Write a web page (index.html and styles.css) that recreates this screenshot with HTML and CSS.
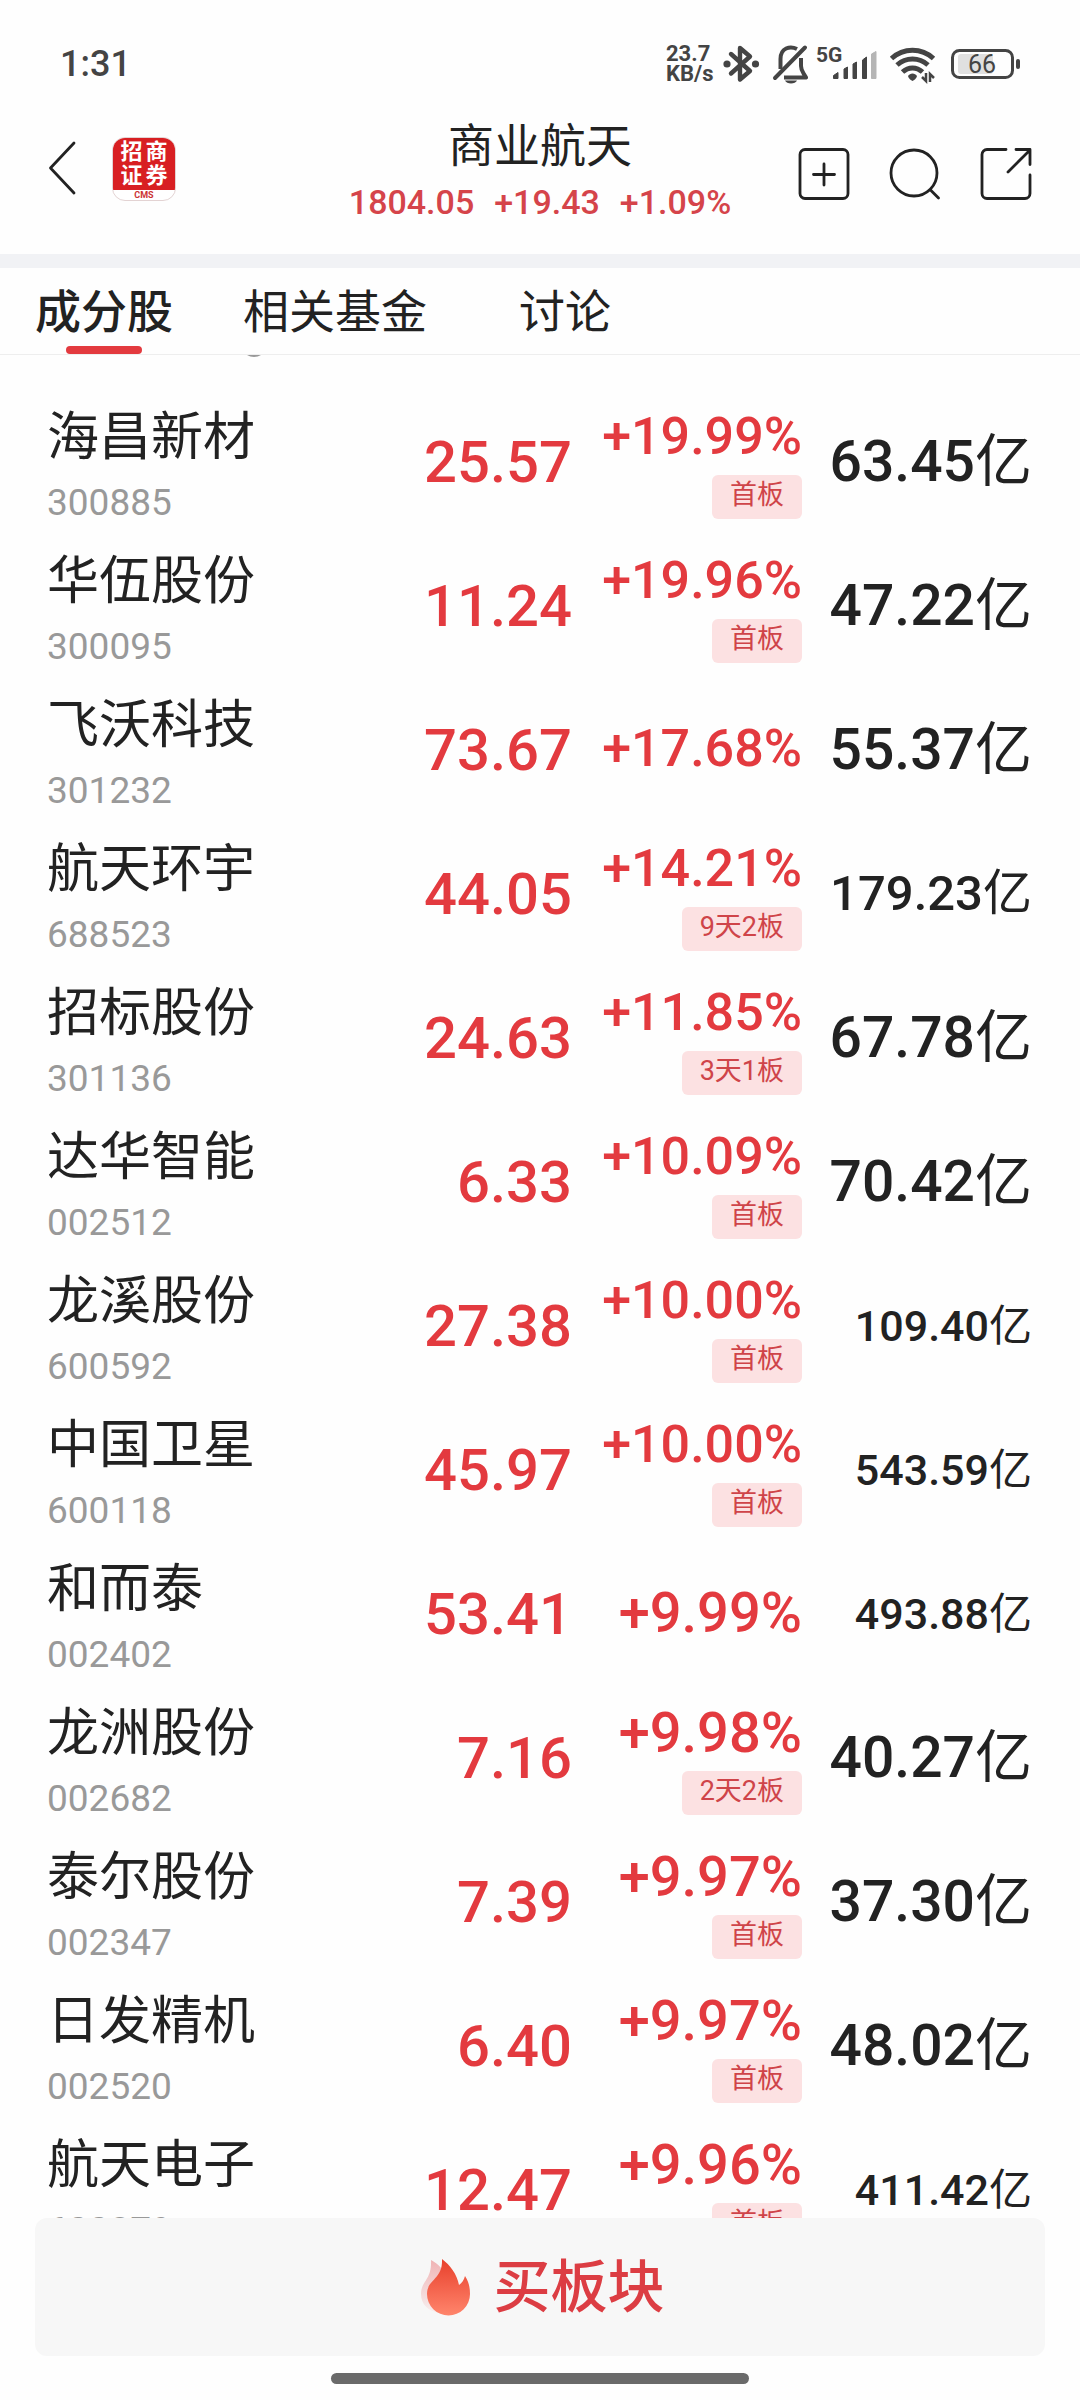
FILE: index.html
```html
<!DOCTYPE html>
<html lang="zh-CN">
<head>
<meta charset="utf-8">
<meta name="viewport" content="width=device-width, initial-scale=1">
<title>商业航天</title>
<link rel="stylesheet" href="styles.css">
</head>
<body>
<div class="app">
  <div class="status">
    <span class="clock">1:31</span>
    <div class="status-icons">
      <span class="rate"><span>23.7</span><span>KB/s</span></span>
      <svg width="40" height="40" viewBox="0 0 40 40" fill="none" stroke="#444" stroke-width="4.4" stroke-linejoin="round" stroke-linecap="round" aria-label="蓝牙">
        <path d="M9 10 28 27 18 35.500V4L28 12.500 9 29.500"/>
        <circle cx="5" cy="20" r="3.600" fill="#444" stroke="none"/><circle cx="33.500" cy="20" r="3.600" fill="#444" stroke="none"/>
      </svg>
      <svg width="38" height="40" viewBox="0 0 38 40" fill="none" stroke="#444" stroke-width="4" aria-label="静音">
        <path d="M5 34 35 3.500" stroke-linecap="round"/>
        <path d="M10.500 25V15C10.500 4 20 1.500 27 5"/>
        <path d="M31 14v8c0 5 2 6 5 11.500H14" stroke-linejoin="round"/>
        <path d="M15 36.500h12c-1.500 4-10.500 4-12 0Z" fill="#444" stroke="none"/>
      </svg>
      <svg width="64" height="40" viewBox="0 0 64 40" fill="#444" aria-label="5G 信号">
        <text x="0" y="18" class="net">5G</text>
        <path d="M17.500 34.500v-3l4.500-3v6ZM28 34.500V25l3.500-2v11.500ZM37 34.500V20l3.500-2v16.500ZM46.500 34.500V16l4-3v21.500Z" stroke="#444" stroke-linejoin="round"/>
        <path d="M55.500 10 60 7.500V34.500h-4.500Z" fill="#b5b5b5" stroke="#b5b5b5" stroke-linejoin="round"/>
      </svg>
      <svg width="54" height="40" viewBox="0 0 54 40" fill="none" stroke="#444" stroke-width="5" aria-label="无线网络">
        <path d="M3.500 14.500c12-11 30-11 42 0"/>
        <path d="M9 21c9-8 22-8 31 0"/>
        <path d="M14.500 28c6-5.500 14-5.500 20 0"/>
        <path d="M20 32c2-3.500 7-3.500 9 0-.5 2.500-3 4.500-4.500 5-1.500-.5-4-2.500-4.500-5Z" fill="#444" stroke="none"/>
        <path d="M38 29v8l-4-4M42 38v-8l4 4" stroke-width="2.500"/>
      </svg>
      <svg width="70" height="40" viewBox="0 0 70 40" aria-label="电量 66">
        <rect x="2.500" y="6.500" width="60" height="27" rx="7" fill="none" stroke="#444" stroke-width="3"/>
        <rect x="8" y="10" width="35" height="20" rx="3" fill="#e0e0e0"/>
        <rect x="66" y="15" width="4" height="10" rx="2" fill="#444"/>
        <text x="32" y="28.500" class="charge">66</text>
      </svg>
    </div>
  </div>

  <header class="header">
    <div class="header-left">
      <button class="icon-btn" aria-label="返回">
        <svg width="28" height="56" viewBox="0 0 28 56" fill="none" stroke="#222" stroke-width="2.800" stroke-linecap="round" stroke-linejoin="round"><path d="M26 2 2.500 27 26 52"/></svg>
      </button>
      <a class="logo" href="#" aria-label="招商证券">
        <span class="logo-main"><span>招</span><span>商</span><span>证</span><span>券</span></span>
        <span class="logo-sub">CMS</span>
      </a>
    </div>
    <div class="header-mid">
      <h1 class="title">商业航天</h1>
      <p class="index"><span>1804.05</span><span>+19.43</span><span>+1.09%</span></p>
    </div>
    <div class="header-right">
      <button class="icon-btn" aria-label="添加">
        <svg width="52" height="52" viewBox="0 0 52 52" fill="none" stroke="#222" stroke-width="2.800" stroke-linecap="round"><rect x="2" y="1.500" width="48" height="49" rx="5"/><path d="M26 16v21M15.500 26.500h21"/></svg>
      </button>
      <button class="icon-btn" aria-label="搜索">
        <svg width="52" height="52" viewBox="0 0 52 52" fill="none" stroke="#222" stroke-width="2.800" stroke-linecap="round"><circle cx="25" cy="25" r="23"/><path d="m41.500 42 8 8"/></svg>
      </button>
      <button class="icon-btn" aria-label="分享">
        <svg width="52" height="52" viewBox="0 0 52 52" fill="none" stroke="#222" stroke-width="2.800" stroke-linecap="round" stroke-linejoin="round"><path d="M26 1.500H7a5 5 0 0 0-5 5v39a5 5 0 0 0 5 5h38a5 5 0 0 0 5-5V27M36 1.500h14v15M49 3 28 24"/></svg>
      </button>
    </div>
  </header>

  <nav class="tabs">
    <a class="tab tab-active" href="#" aria-current="page">成分股</a>
    <a class="tab" href="#">相关基金</a>
    <a class="tab" href="#">讨论</a>
  </nav>

  <main class="list">
    <table class="stocks">
      <colgroup><col><col class="c-price"><col class="c-change"><col class="c-cap"></colgroup>
      <thead>
        <tr>
          <th><span class="th-name">名称代码<svg width="28" height="28" viewBox="0 0 28 28" aria-hidden="true"><circle cx="14" cy="14" r="13" fill="#999"/></svg></span></th>
          <th>最新价</th><th>涨跌幅</th><th>总市值</th>
        </tr>
      </thead>
      <tbody>
        <tr><td><div class="name">海昌新材</div><div class="code">300885</div></td><td class="price">25.57</td><td><div class="change change-long">+19.99%</div><span class="tag">首板</span></td><td class="cap">63.45<span class="unit">亿</span></td></tr>
        <tr><td><div class="name">华伍股份</div><div class="code">300095</div></td><td class="price">11.24</td><td><div class="change change-long">+19.96%</div><span class="tag">首板</span></td><td class="cap">47.22<span class="unit">亿</span></td></tr>
        <tr><td><div class="name">飞沃科技</div><div class="code">301232</div></td><td class="price">73.67</td><td><div class="change change-long">+17.68%</div></td><td class="cap">55.37<span class="unit">亿</span></td></tr>
        <tr><td><div class="name">航天环宇</div><div class="code">688523</div></td><td class="price">44.05</td><td><div class="change change-long">+14.21%</div><span class="tag">9天2板</span></td><td class="cap cap-mid">179.23<span class="unit">亿</span></td></tr>
        <tr><td><div class="name">招标股份</div><div class="code">301136</div></td><td class="price">24.63</td><td><div class="change change-long">+11.85%</div><span class="tag">3天1板</span></td><td class="cap">67.78<span class="unit">亿</span></td></tr>
        <tr><td><div class="name">达华智能</div><div class="code">002512</div></td><td class="price">6.33</td><td><div class="change change-long">+10.09%</div><span class="tag">首板</span></td><td class="cap">70.42<span class="unit">亿</span></td></tr>
        <tr><td><div class="name">龙溪股份</div><div class="code">600592</div></td><td class="price">27.38</td><td><div class="change change-long">+10.00%</div><span class="tag">首板</span></td><td class="cap cap-small">109.40<span class="unit">亿</span></td></tr>
        <tr><td><div class="name">中国卫星</div><div class="code">600118</div></td><td class="price">45.97</td><td><div class="change change-long">+10.00%</div><span class="tag">首板</span></td><td class="cap cap-small">543.59<span class="unit">亿</span></td></tr>
        <tr><td><div class="name">和而泰</div><div class="code">002402</div></td><td class="price">53.41</td><td><div class="change">+9.99%</div></td><td class="cap cap-small">493.88<span class="unit">亿</span></td></tr>
        <tr><td><div class="name">龙洲股份</div><div class="code">002682</div></td><td class="price">7.16</td><td><div class="change">+9.98%</div><span class="tag">2天2板</span></td><td class="cap">40.27<span class="unit">亿</span></td></tr>
        <tr><td><div class="name">泰尔股份</div><div class="code">002347</div></td><td class="price">7.39</td><td><div class="change">+9.97%</div><span class="tag">首板</span></td><td class="cap">37.30<span class="unit">亿</span></td></tr>
        <tr><td><div class="name">日发精机</div><div class="code">002520</div></td><td class="price">6.40</td><td><div class="change">+9.97%</div><span class="tag">首板</span></td><td class="cap">48.02<span class="unit">亿</span></td></tr>
        <tr><td><div class="name">航天电子</div><div class="code">600879</div></td><td class="price">12.47</td><td><div class="change">+9.96%</div><span class="tag">首板</span></td><td class="cap cap-small">411.42<span class="unit">亿</span></td></tr>
      </tbody>
    </table>
  </main>

  <footer class="footer">
    <button class="buy">
      <svg width="52" height="60" viewBox="0 0 52 60" aria-hidden="true">
        <defs>
          <linearGradient id="flame" x1="0" y1="0" x2="0" y2="1"><stop offset="0" stop-color="#e8402c"/><stop offset="1" stop-color="#ff856c"/></linearGradient>
          <linearGradient id="shade" x1="0" y1="0" x2="0" y2="1"><stop offset="0" stop-color="#f0b3b4"/><stop offset="1" stop-color="#f7eeee"/></linearGradient>
        </defs>
        <path d="M11 2c8 4 13 11 16 16l-4 36C10 56 1 47 1 36c0-13 11-14 10-34Z" fill="url(#shade)"/>
        <path d="M22 1c8 6 15 15 17 26 3-2 5-5 6-9 4 6 5 12 5 18a21.500 21.500 0 0 1-43 0c0-15 16-14 15-35Z" fill="url(#flame)"/>
      </svg>
      <span>买板块</span>
    </button>
    <div class="home-bar"></div>
  </footer>
</div>
</body>
</html>
```
FILE: styles.css
```css
* { box-sizing: border-box; }

body {
  margin: 0;
  background: #fefefe;
  color: #222;
  font-family: Roboto, "Noto Sans CJK SC", sans-serif;
}

h1, p { margin: 0; font-weight: 400; }
a { color: inherit; text-decoration: none; }
button { padding: 0; border: 0; background: none; font: inherit; color: inherit; }
svg { display: block; }

.app { display: flex; flex-direction: column; height: 100vh; }

/* Status bar */
.status {
  display: flex;
  justify-content: space-between;
  align-items: center;
  padding: 44px 60px 0;
  color: #444;
}
.clock { font-size: 36px; line-height: 40px; font-weight: 500; }
.status-icons { display: flex; gap: 8px; }
.rate {
  display: flex;
  flex-direction: column;
  width: 48px;
  font-size: 22px;
  line-height: 20px;
  font-weight: 700;
}
.net { font-size: 21px; font-weight: 700; }
.charge { font-size: 25px; fill: #444; text-anchor: middle; }

/* Header */
.header {
  display: grid;
  grid-template-columns: 1fr auto 1fr;
  align-items: center;
  height: 170px;
  padding: 0 48px;
}
.header-left { display: flex; align-items: center; gap: 36px; }
.header-mid { padding-top: 4px; text-align: center; }
.header-right { display: flex; justify-content: flex-end; gap: 39px; padding-top: 10px; }
.logo {
  display: flex;
  flex-direction: column;
  width: 64px;
  height: 64px;
  overflow: hidden;
  border: 1px solid #e3d3d3;
  border-radius: 13px;
  background: #fff;
  text-align: center;
}
.logo-main {
  flex: 1;
  display: grid;
  grid-template-columns: 22px 22px;
  place-content: center;
  column-gap: 3px;
  background: #d81f22;
  color: #fff;
  font-size: 22px;
  line-height: 24px;
  font-weight: 700;
}
.logo-sub { font-size: 9px; line-height: 10px; font-weight: 700; color: #c33; }
.title { font-size: 46px; line-height: 56px; }
.index {
  display: flex;
  justify-content: center;
  gap: 20px;
  margin-top: 6px;
  font-size: 34px;
  line-height: 44px;
  font-weight: 500;
  color: #d5444a;
}

/* Tabs */
.tabs {
  display: flex;
  gap: 70px;
  padding: 0 35px;
  border-top: 14px solid #f1f2f5;
  border-bottom: 1px solid #eee;
}
.tab {
  position: relative;
  min-width: 136px;
  padding-top: 2px;
  font-size: 46px;
  line-height: 84px;
  text-align: center;
}
.tab-active { font-weight: 500; }
.tab-active::after {
  content: "";
  position: absolute;
  left: 50%;
  bottom: 0;
  width: 76px;
  height: 8px;
  margin-left: -38px;
  border-radius: 4px;
  background: #e33a3f;
}

/* Constituent list, scrolled so that its heading row is almost out of view */
.list { flex: 1; min-height: 0; overflow: hidden; }
.stocks {
  width: 100%;
  margin-top: -50px;
  table-layout: fixed;
  border-collapse: collapse;
}
.c-price, .c-change { width: 230px; }
.c-cap { width: 278px; }
.stocks th {
  height: 84px;
  padding: 13px 0 0;
  font-size: 32px;
  line-height: 44px;
  font-weight: 400;
  color: #999;
  text-align: right;
  vertical-align: top;
}
.th-name { display: flex; align-items: flex-end; gap: 65px; }
.th-name svg { margin-bottom: 4px; }
.stocks td { height: 144px; padding: 0; text-align: right; white-space: nowrap; }
.stocks th:first-child, .stocks td:first-child { padding-left: 47px; text-align: left; }
.stocks td:first-child { padding-top: 6px; }
.stocks th:last-child, .stocks td:last-child { padding-right: 48px; }
.name { font-size: 52px; line-height: 64px; }
.code { margin-top: 13px; font-size: 37px; line-height: 40px; color: #999; }
.price, .change { color: #e33a3f; font-weight: 500; }
.price { font-size: 58px; }
.change { font-size: 56px; line-height: 68px; }
.change-long { font-size: 52px; }
.tag {
  display: block;
  width: fit-content;
  margin: 4px 0 0 auto;
  padding: 0 18px 3px;
  border-radius: 6px;
  background: #fce1e2;
  color: #cf4449;
  font-size: 27px;
  line-height: 41px;
}
.stocks .price, .stocks .cap { padding-top: 2px; }
.cap { font-size: 57px; line-height: 64px; font-weight: 500; }
.cap-mid { font-size: 49px; }
.cap-small { font-size: 43px; }
.unit { font-weight: 400; }

/* Bottom action */
.footer { padding: 0 35px 16px; }
.buy {
  display: flex;
  justify-content: center;
  align-items: center;
  gap: 22px;
  width: 100%;
  height: 138px;
  padding: 2px 0 0 4px;
  border-radius: 12px;
  background: #f7f7f7;
  color: #dc3d43;
  font-size: 57px;
  line-height: 64px;
  font-weight: 500;
}
.home-bar {
  width: 418px;
  max-width: 50%;
  height: 11px;
  margin: 17px auto 0;
  border-radius: 6px;
  background: #6a6a6a;
}
```
